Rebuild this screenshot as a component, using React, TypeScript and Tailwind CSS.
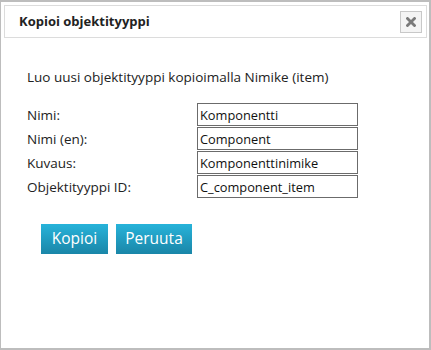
const fields = [
  { label: "Nimi:", value: "Komponentti" },
  { label: "Nimi (en):", value: "Component" },
  { label: "Kuvaus:", value: "Komponenttinimike" },
  { label: "Objektityyppi ID:", value: "C_component_item" },
];

export default function App() {
  return (
    <div className="h-[350px] w-[431px] bg-[#cfcfcf] font-['Open_Sans',sans-serif] text-[#222]">
      <div className="flex h-[350px] w-[431px] flex-col border-t-2 border-r-2 border-b-2 border-l border-[#bdbdbd] bg-white pt-[3px] pl-[3px] pr-[2px]">
        {/* header */}
        <div className="flex h-[33px] items-center justify-between border border-[#dcdcdc] pl-[14px] pr-[4px]">
          <span className="text-[13px] font-bold text-[#222]">Kopioi objektityyppi</span>
          <button className="flex h-[22px] w-[22px] items-center justify-center border border-[#c8c8c8] bg-[#f4f4f4]">
            <svg width="10" height="10" viewBox="0 0 10 10">
              <path d="M1.5 1.5 L8.5 8.5 M8.5 1.5 L1.5 8.5" stroke="#7a7a7a" strokeWidth="2.8" strokeLinecap="square" />
            </svg>
          </button>
        </div>

        {/* body */}
        <div className="flex flex-col pl-[23px] pt-[30px] text-[13.5px]">
          <p className="leading-[18px]">Luo uusi objektityyppi kopioimalla Nimike (item)</p>
          <div className="mt-[17px] flex flex-col gap-[1px]">
            {fields.map((f) => (
              <div key={f.label} className="flex items-center">
                <label className="w-[170px] leading-[18px]">{f.label}</label>
                <input
                  readOnly
                  value={f.value}
                  className="h-[23px] w-[161px] border border-[#6b6b6b] px-[2px] text-[12.8px] text-[#111] outline-none"
                />
              </div>
            ))}
          </div>
          <div className="mt-[26px] flex gap-[8px] pl-[14px]">
            <button className="h-[30px] w-[67px] bg-gradient-to-b from-[#27b3da] to-[#1a86a8] text-[15.5px] text-white">
              Kopioi
            </button>
            <button className="h-[30px] w-[76px] bg-gradient-to-b from-[#27b3da] to-[#1a86a8] text-[15.5px] text-white">
              Peruuta
            </button>
          </div>
        </div>
      </div>
    </div>
  );
}
